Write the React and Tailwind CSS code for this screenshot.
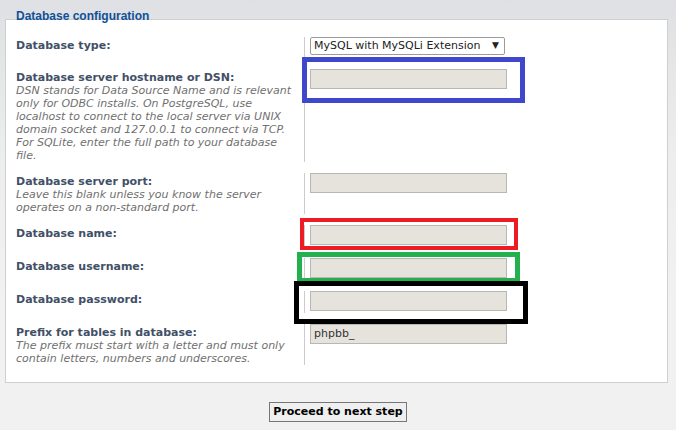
import React from 'react';

const Field = ({ value, box }) => {
  return (
    <div className="relative w-[197px]">
      {box && <div className={box}></div>}
      <div className="h-[20px] w-[197px] border border-[#b9b7b2] bg-[#e6e3dd] px-[3px] text-[11px] leading-[18px] text-[#333]">
        {value}
      </div>
    </div>
  );
};

const Row = ({ label, desc, minH = 'min-h-[22px]', children }) => {
  return (
    <div className="flex items-stretch">
      <div className="w-[289px] shrink-0 border-r border-[#cccccc] pt-[2px] pr-[8px]">
        <div className="text-[11px] font-bold leading-[13px] text-[#425067]">{label}</div>
        {desc && <div className="text-[11px] italic leading-[13px] text-[#707070]">{desc}</div>}
      </div>
      <div className={`${minH} pl-[5px]`}>{children}</div>
    </div>
  );
};

const App = () => {
  return (
    <div className="min-h-[430px] w-full bg-[linear-gradient(to_bottom,#dee0e3_0px,#eceded_150px,#f1f1f1_300px)] pt-[10px] font-['DejaVu_Sans',Verdana,sans-serif]">
      {/* legend */}
      <div className="relative z-10 h-[13px] pl-[16px] font-['Liberation_Sans',Arial,sans-serif] text-[12px] font-bold leading-[13px] text-[#115098]">
        Database configuration
      </div>
      {/* panel */}
      <div className="relative -mt-[4px] ml-[5px] w-[663px] border border-[#cfcfcf] bg-white px-[10px] pt-[17px] pb-[17px]">
        <div className="flex flex-col gap-[11px]">
          <Row label="Database type:" minH="min-h-[21px]">
            <div className="flex h-[18px] w-[195px] items-center justify-between rounded-[2px] border border-[#9b9b9b] bg-white pl-[3px] pr-[5px] text-[11px] text-[#222]">
              <span>MySQL with MySQLi Extension</span>
              <span className="text-[9px]">▼</span>
            </div>
          </Row>
          <Row
            label="Database server hostname or DSN:"
            desc="DSN stands for Data Source Name and is relevant only for ODBC installs. On PostgreSQL, use localhost to connect to the local server via UNIX domain socket and 127.0.0.1 to connect via TCP. For SQLite, enter the full path to your database file."
          >
            <Field box="absolute -top-[12px] -left-[8px] -right-[18px] -bottom-[14px] z-20 border-[5px] border-[#3f48cc]" />
          </Row>
          <Row
            label="Database server port:"
            desc="Leave this blank unless you know the server operates on a non-standard port."
          >
            <Field />
          </Row>
          <Row label="Database name:">
            <Field box="absolute -top-[7px] -left-[10px] -right-[11px] -bottom-[5px] z-20 border-[4px] border-[#ed1c24]" />
          </Row>
          <Row label="Database username:">
            <Field box="absolute -top-[6px] -left-[13px] -right-[13px] -bottom-[5px] z-20 border-[5px] border-[#22b14c]" />
          </Row>
          <Row label="Database password:">
            <Field box="absolute -top-[10px] -left-[16px] -right-[21px] -bottom-[13px] z-20 border-[5px] border-black" />
          </Row>
          <Row
            label="Prefix for tables in database:"
            desc="The prefix must start with a letter and must only contain letters, numbers and underscores."
          >
            <Field value="phpbb_" />
          </Row>
        </div>
      </div>
      {/* submit */}
      <div className="mt-[19px] flex justify-center">
        <button className="h-[20px] border border-[#767676] bg-[#efefef] px-[3px] text-[11px] font-bold leading-[18px] text-black">
          Proceed to next step
        </button>
      </div>
    </div>
  );
};

export default App;
